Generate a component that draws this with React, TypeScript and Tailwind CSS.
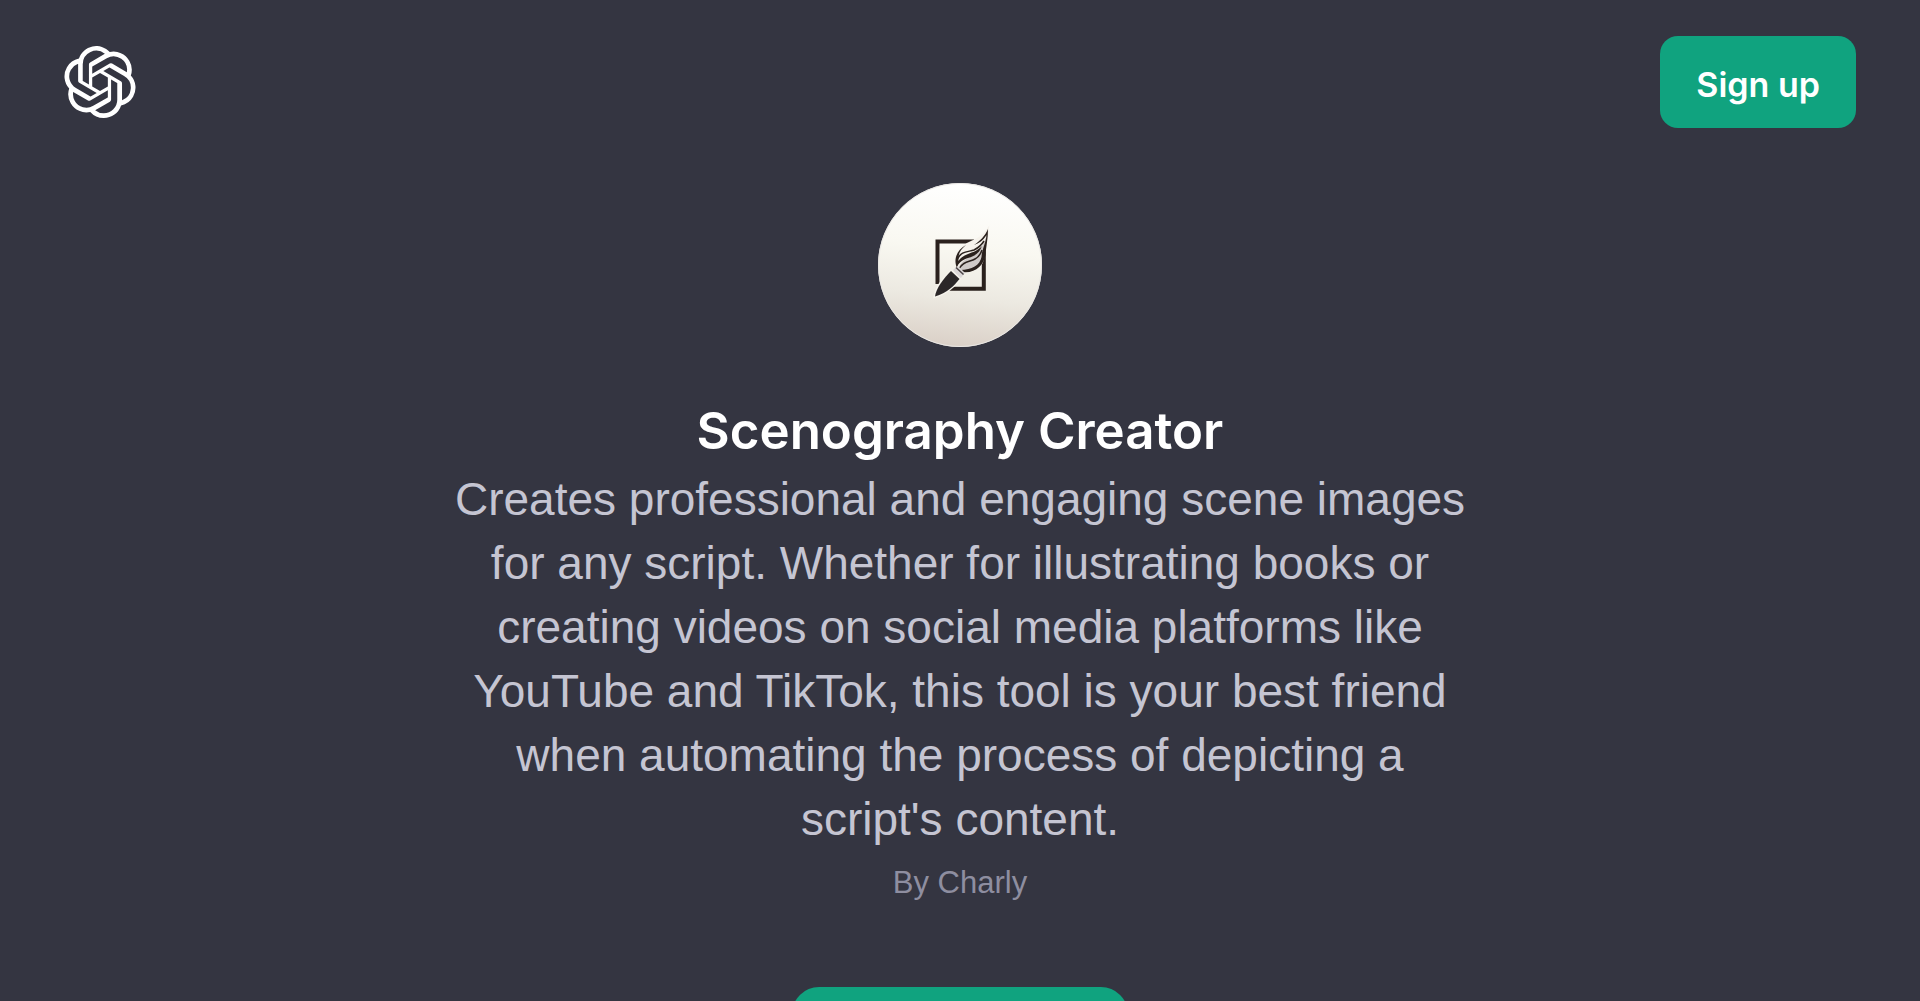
import { SiOpenai } from 'react-icons/si';

const gpt = {
  name: 'Scenography Creator',
  description:
    "Creates professional and engaging scene images for any script. Whether for illustrating books or creating videos on social media platforms like YouTube and TikTok, this tool is your best friend when automating the process of depicting a script's content.",
  author: 'Charly',
};

function BrushIcon() {
  return (
    <svg viewBox="0 0 164 164" className="block size-full" aria-hidden="true">
      <defs>
        <linearGradient id="paper" x1="0.55" y1="0" x2="0.45" y2="1">
          <stop offset="0" stopColor="#ffffff" />
          <stop offset="0.4" stopColor="#f9f8f1" />
          <stop offset="0.7" stopColor="#ece9e1" />
          <stop offset="1" stopColor="#dad0c7" />
        </linearGradient>
      </defs>
      <circle cx="82" cy="82" r="82" fill="url(#paper)" />
      <circle cx="82" cy="82" r="81.5" fill="none" stroke="#e9e7e4" strokeWidth="1" />

      {/* frame */}
      <path
        d="M59.500 101V58.500H96M105.800 60V105.800H68"
        fill="none"
        stroke="#2a211d"
        strokeWidth="4"
      />

      {/* bristles */}
      <path
        d="M110 46C102 58 94 57 86 63C79 68 75 76 79 85L84 89C94 90 103 85 105 76C106 67 109 60 110 46Z"
        fill="#f6f3ec"
        stroke="#f6f3ec"
        strokeWidth="2"
      />
      <path
        d="M109.500 50C107 62 106 70 104 77C100 85 93 88 84 88L81 84C84 77 90 75 95 73C102 70 105 62 109.500 50Z"
        fill="#cfcac8"
      />
      <path
        d="M110 46C110 56 108 64 107.500 72C106 82 97 91 84 89L82 87C94 87 102 82 103.500 74C104 66 108 60 108.500 52C105 58 101 60 96 62C102 58 107 53 110 46Z"
        fill="#2a211d"
      />
      <path
        d="M88 62C79 67 75 76 79 85C80 80 84 77 90 75C98 73 102 69 104 63C99 68 95 69 90 71C85 73 82 75 80.500 78C80 71 82 67 88 62Z"
        fill="#2a211d"
      />
      <path
        d="M79.500 76C83 68 90 69 96 67C100 65 103 63 106 58M81 86C85 78 92 79 97 76C101 74 103 70 104 67"
        fill="none"
        stroke="#2a211d"
        strokeWidth="1.500"
      />

      {/* ferrule and handle */}
      <path d="M75 87L80 83L87 90L82 96Z" fill="#dcd8d8" />
      <path d="M78 84.500L85.500 91.500" stroke="#4c4546" strokeWidth="1.500" />
      <path
        d="M73 88L81.500 96C76 103 69 110 57 113.500C58 105 66 95 73 88Z"
        fill="#2b2728"
        stroke="#f6f3ec"
        strokeWidth="3"
        paintOrder="stroke"
      />
    </svg>
  );
}

export default function App() {
  return (
    <div className="flex h-screen flex-col overflow-hidden bg-[#343541] font-['Liberation_Sans',Arial,sans-serif]">
      <header className="flex items-center justify-between px-16 pt-9">
        <a href="/" aria-label="Home" className="text-white">
          <SiOpenai className="size-[72px]" />
        </a>
        <button className="h-[92px] rounded-[18px] bg-[#10a37f] px-9 pt-1 font-['Inter',sans-serif] text-[34px] font-semibold text-white">
          Sign up
        </button>
      </header>

      <main className="flex shrink-0 flex-col items-center px-6 pt-[55px]">
        <div className="size-[164px] shrink-0 rounded-full">
          <BrushIcon />
        </div>
        <h1 className="mt-12 text-center font-['Inter',sans-serif] text-[51px] leading-[72px] font-semibold text-white">
          {gpt.name}
        </h1>
        <p className="max-w-[1024px] text-center text-[46px] leading-[64px] text-[#c5c5d2]">
          {gpt.description}
        </p>
        <p className="text-[31px] leading-[64px] text-[#8e8ea0]">By {gpt.author}</p>
        <button
          aria-label="Start chat"
          className="mt-[72px] h-[92px] w-[336px] shrink-0 rounded-[27px] bg-[#10a37f]"
        />
      </main>
    </div>
  );
}
